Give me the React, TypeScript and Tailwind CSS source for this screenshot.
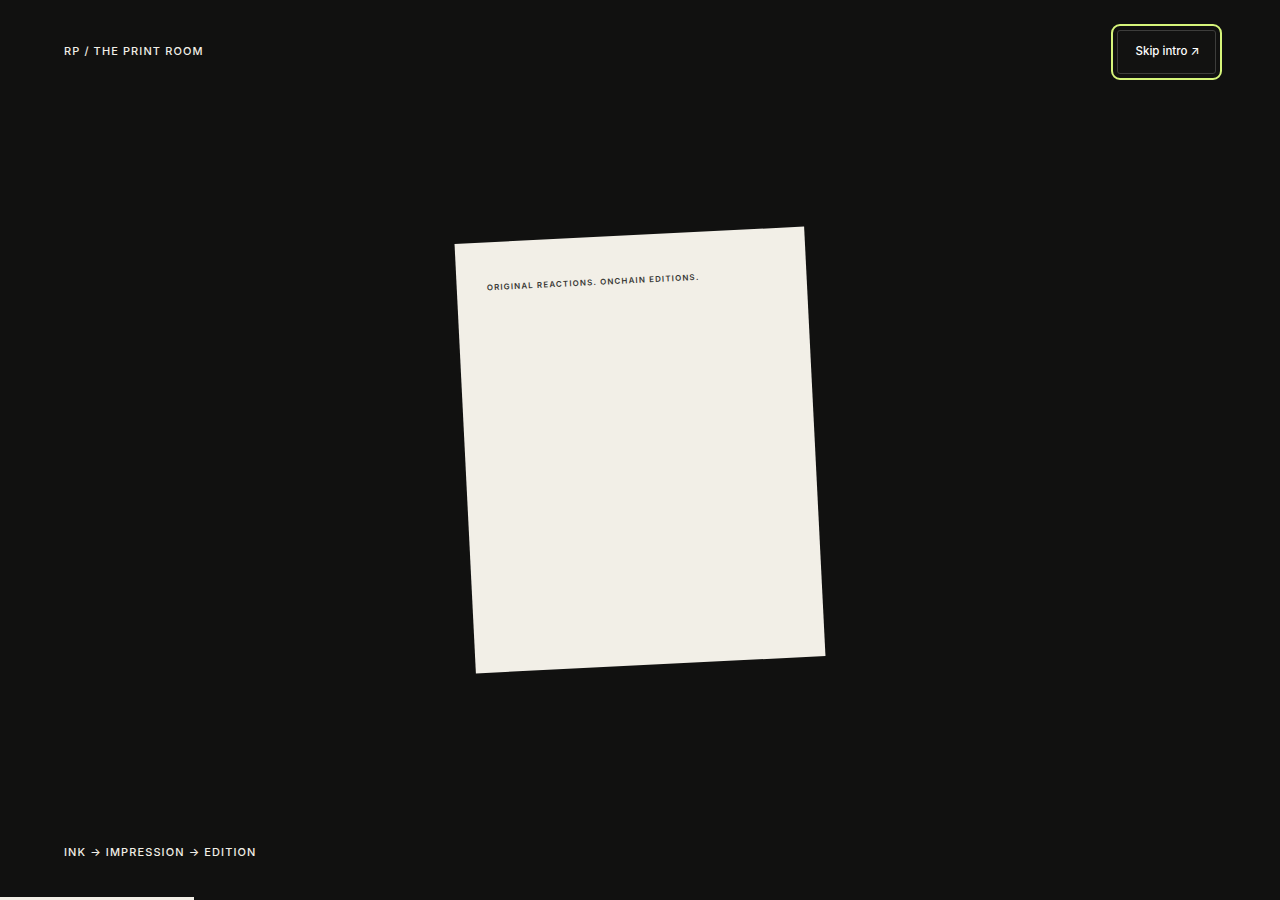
import React from "react";

export default function App() {
  return (
    <div className="relative h-[900px] w-full overflow-hidden bg-[#111110] text-white" style={{ fontFamily: "Inter, 'Liberation Sans', sans-serif" }}>
      <div className="absolute inset-0 flex items-center justify-center">
        <div className="h-[430px] w-[350px] rotate-[-2.85deg] bg-[#f2efe7] pl-[30px] pt-[39px]">
          <p className="text-[8px] font-semibold leading-[12px] tracking-[0.14em] text-[#383835]">
            ORIGINAL REACTIONS. ONCHAIN EDITIONS.
          </p>
        </div>
      </div>

      <div className="relative flex h-full flex-col justify-between px-16 pt-[30px] pb-[38px]">
        <header className="flex items-center justify-between">
          <span className="-translate-y-px text-[11px] font-medium uppercase tracking-[0.1em] text-[#f2efe7]">RP / The Print Room</span>
          <button className="flex h-[44px] w-[99px] items-center justify-center rounded-[3px] border border-[#3d3d3b] bg-[#121211] pl-[2px] text-[11.5px] font-medium text-white outline-2 outline-offset-[4px] outline-[#d6f57a] [outline-style:solid]">
            Skip intro ↗
          </button>
        </header>
        <footer>
          <span className="text-[11px] font-medium uppercase tracking-[0.1em] text-[#f2efe7]">Ink → Impression → Edition</span>
        </footer>
      </div>

      <div className="absolute bottom-0 left-0 h-[3px] w-[194px] bg-[#f2efe7]" />
    </div>
  );
}
